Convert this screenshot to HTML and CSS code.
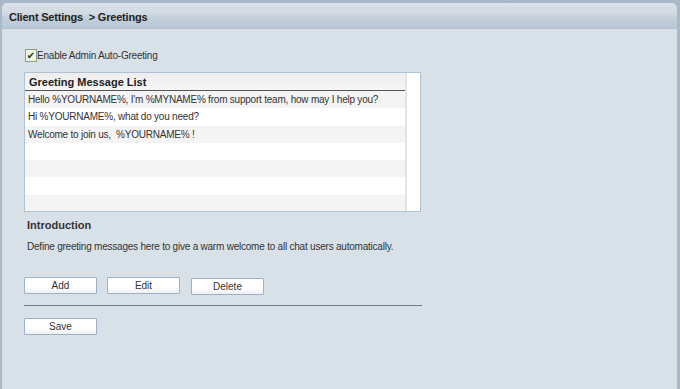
FILE: index.html
```html
<!DOCTYPE html>
<html lang="en">
<head>
  <meta charset="UTF-8">
  <title>Client Settings - Greetings</title>
  <link rel="stylesheet" href="styles.css">
</head>
<body>
  <div class="panel">
    <div class="panel-head">Client Settings &nbsp;&gt; Greetings</div>
    <div class="panel-body">
      <label class="check">
        <span class="box">&#10004;</span>Enable Admin Auto-Greeting
      </label>

      <div class="list">
        <div class="list-main">
          <div class="list-head">Greeting Message List</div>
          <div class="row">Hello %YOURNAME%, I'm %MYNAME% from support team, how may I help you?</div>
          <div class="row">Hi %YOURNAME%, what do you need?</div>
          <div class="row">Welcome to join us, &nbsp;%YOURNAME% !</div>
          <div class="row"></div>
          <div class="row"></div>
          <div class="row"></div>
          <div class="row"></div>
        </div>
        <div class="list-scroll"></div>
      </div>

      <h3 class="intro-title">Introduction</h3>
      <p class="intro-text">Define greeting messages here to give a warm welcome to all chat users automatically.</p>

      <div class="actions">
        <button class="btn">Add</button>
        <button class="btn">Edit</button>
        <button class="btn btn-low">Delete</button>
      </div>
      <div class="divider"></div>
      <button class="btn">Save</button>
    </div>
  </div>
</body>
</html>
```

FILE: styles.css
```css
html, body { margin: 0; padding: 0; height: 100%; }
body { font-family: "Liberation Sans", Arial, sans-serif; font-size: 10px; letter-spacing: -0.22px; color: #333; background: #a9b9c9; }

.panel { height: 389px; box-sizing: border-box; padding: 3px 3px 0 2px; display: flex; flex-direction: column; }
.panel-head {
  height: 25px; line-height: 28px; padding-left: 7px; border-radius: 5px 5px 0 0;
  font-weight: bold; font-size: 11px; letter-spacing: -0.2px; color: #222;
  background: linear-gradient(#dbe2e9 0, #d2dae2 40%, #c3cfdb 60%, #b9c7d4 100%);
  border-bottom: 1px solid #b3c1ce;
}
.panel-body { flex: 1; background: #d9e1e8; padding: 18px 0 0 22px; }

.check { display: flex; align-items: center; height: 16px; margin-left: 1px; }
.box {
  width: 10px; height: 11px; border: 1px solid #8da17a; background: #eef3e6;
  font-family: "DejaVu Sans", sans-serif; font-size: 10px; font-weight: bold; line-height: 11px; color: #1d3a12; text-align: center; letter-spacing: 0;
}

.list { display: flex; width: 397px; height: 140px; margin-top: 9px; border: 1px solid #b3c2d1; background: #fff; box-sizing: border-box; }
.list-main { flex: 1; overflow: hidden; }
.list-head {
  height: 17px; line-height: 18px; padding-left: 4px; font-weight: bold; font-size: 11px; letter-spacing: 0; color: #222;
  background: linear-gradient(#eeeeee, #f6f6f6); border-bottom: 1px solid #555;
}
.row { height: 17.3px; line-height: 17px; padding-left: 3px; white-space: nowrap; }
.row:nth-child(even) { background: #f4f4f4; }
.list-scroll { width: 13px; background: #fff; border-left: 2px solid #e4e4e4; }

.intro-title { margin: 7px 0 0 3px; font-size: 11px; letter-spacing: 0; font-weight: bold; }
.intro-text { margin: 10px 0 0 3px; font-size: 10px; }

.actions { display: flex; gap: 10px; margin-top: 25px; align-items: flex-start; }
.btn {
  width: 73px; height: 17px; padding: 0; margin: 0; font-family: "Liberation Sans", Arial, sans-serif; font-size: 10px; color: #333;
  background: linear-gradient(#ffffff 0, #ffffff 60%, #eef1f4 100%); border: 1px solid #9fb2c5; border-radius: 1px;
}
.btn-low { margin-top: 1px; margin-left: 1px; }
.divider { width: 398px; height: 1px; background: #6f7c88; margin: 10px 0 12px 0; }
```
